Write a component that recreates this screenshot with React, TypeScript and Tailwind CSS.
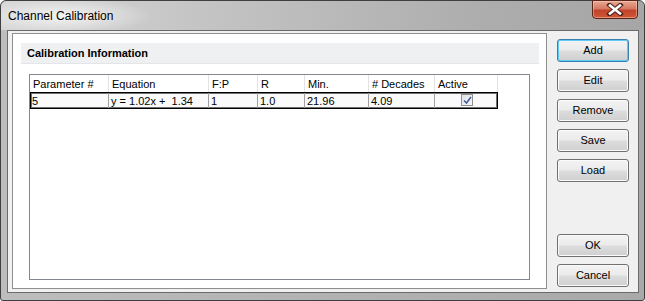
import { useState } from "react";

const cols = [
  { label: "Parameter #", w: "w-[79px]", value: "5" },
  { label: "Equation", w: "w-[100px]", value: "y = 1.02x +  1.34" },
  { label: "F:P", w: "w-[49px]", value: "1" },
  { label: "R", w: "w-[47px]", value: "1.0" },
  { label: "Min.", w: "w-[64px]", value: "21.96" },
  { label: "# Decades", w: "w-[66px]", value: "4.09" },
  { label: "Active", w: "w-[63px]", value: "" },
];

function Btn({ label, def }: { label: string; def?: boolean }) {
  return (
    <button
      className={`h-[23px] w-[72px] rounded-[3px] border text-[11px] text-black bg-[linear-gradient(#f3f3f3_0%,#ebebeb_48%,#dddddd_52%,#cfcfcf_100%)] ${
        def
          ? "border-[#3c7fb1] shadow-[inset_0_0_0_1px_#5fcaf3]"
          : "border-[#707070] shadow-[inset_0_0_0_1px_#fbfbfb]"
      }`}
    >
      {label}
    </button>
  );
}

function CloseIcon() {
  return (
    <svg width="18" height="13" viewBox="0 0 18 13">
      <path d="M3.5 2 L14.5 11 M14.5 2 L3.5 11" stroke="#4e2219" strokeWidth="4.6" strokeLinecap="square" />
      <path d="M4 2.5 L14 10.5 M14 2.5 L4 10.5" stroke="#ffffff" strokeWidth="2.6" strokeLinecap="square" />
    </svg>
  );
}

function Check({ on }: { on: boolean }) {
  return (
    <div className="w-[12px] h-[12px] border border-[#8f8f8f] bg-[linear-gradient(135deg,#dfe3ea,#f6f7f9)] flex items-center justify-center">
      {on && (
        <svg width="9" height="9" viewBox="0 0 9 9">
          <path d="M1 4.5 L3.5 7 L8 1" fill="none" stroke="#4a5f97" strokeWidth="1.6" />
        </svg>
      )}
    </div>
  );
}

export default function App() {
  const [active, setActive] = useState(true);

  return (
    <div className="w-[645px] h-[301px] overflow-hidden font-['Liberation_Sans',Arial,sans-serif]">
      <div className="w-[645px] h-[301px] flex flex-col border border-[#3f3f3f] rounded-t-[6px] rounded-b-[3px] bg-[linear-gradient(to_right,#bdbdbd,#b2b2b2_50%,#a9a9a9)]">
        {/* title bar */}
        <div className="h-[29px] flex items-start rounded-t-[6px] bg-[radial-gradient(ellipse_90px_18px_at_62px_15px,rgba(255,255,255,0.75),transparent),linear-gradient(to_right,#d6d6d6,#c2c2c2_35%,#adadad_75%,#a6a6a6)]">
          <p className="pl-[7px] pt-[7px] text-[12px] text-black leading-[16px]">Channel Calibration</p>
          <div className="ml-auto mr-[6px] w-[46px] h-[19px] -mt-px rounded-b-[4px] border border-[#5b2419] bg-[linear-gradient(#e8a996_0%,#d57a62_45%,#c2432a_55%,#cf5836_100%)] shadow-[inset_0_0_0_1px_rgba(255,220,200,0.45)] flex items-center justify-center">
            <CloseIcon />
          </div>
        </div>

        {/* client area */}
        <div className="ml-[6px] mr-[5px] h-[263px] border border-[#6a6a6a] bg-[#f0f0f0] flex pl-[4px] pt-[2px]">
          <div className="w-[535px] h-[256px] border border-[#8e8f8f] bg-white flex flex-col">
            <div className="ml-[8px] mr-[7px] mt-[9px] h-[21px] bg-[#eff0f2] border-b border-[#e4e5e8] flex items-center pl-[6px]">
              <p className="text-[11px] font-bold text-black">Calibration Information</p>
            </div>

            <div className="ml-[16px] mt-[10px] w-[501px] h-[206px] border border-[#828790] bg-white flex flex-col text-[11px] text-black">
              <div className="h-[17px] flex">
                {cols.map((c) => (
                  <div key={c.label} className={`${c.w} h-full border-r border-[#e3e3e3] pl-[3px] pt-[2px] flex items-center whitespace-nowrap`}>
                    {c.label}
                  </div>
                ))}
              </div>
              <div className="w-[468px] h-[17px] flex border border-black shadow-[inset_0_0_0_1px_#6f6f6f] bg-[#fafafa]">
                {cols.map((c, i) => (
                  <div
                    key={c.label}
                    className={`${i === 0 ? "w-[78px]" : i === 6 ? "w-[62px]" : c.w} h-full flex items-center whitespace-pre pt-px ${
                      i < 6 ? "border-r border-[#a0a0a0]" : ""
                    } ${i === 0 ? "pl-[1px]" : "pl-[2px]"} ${i === 6 ? "justify-center" : ""}`}
                  >
                    {i === 6 ? (
                      <div className="-mt-[2px]" onClick={() => setActive(!active)}>
                        <Check on={active} />
                      </div>
                    ) : (
                      c.value
                    )}
                  </div>
                ))}
              </div>
            </div>
          </div>

          <div className="ml-[10px] pt-[6px] pb-[5px] flex flex-col">
            <div className="flex flex-col gap-[7px]">
              <Btn label="Add" def />
              <Btn label="Edit" />
              <Btn label="Remove" />
              <Btn label="Save" />
              <Btn label="Load" />
            </div>
            <div className="mt-auto flex flex-col gap-[7px]">
              <Btn label="OK" />
              <Btn label="Cancel" />
            </div>
          </div>
        </div>
      </div>
    </div>
  );
}
